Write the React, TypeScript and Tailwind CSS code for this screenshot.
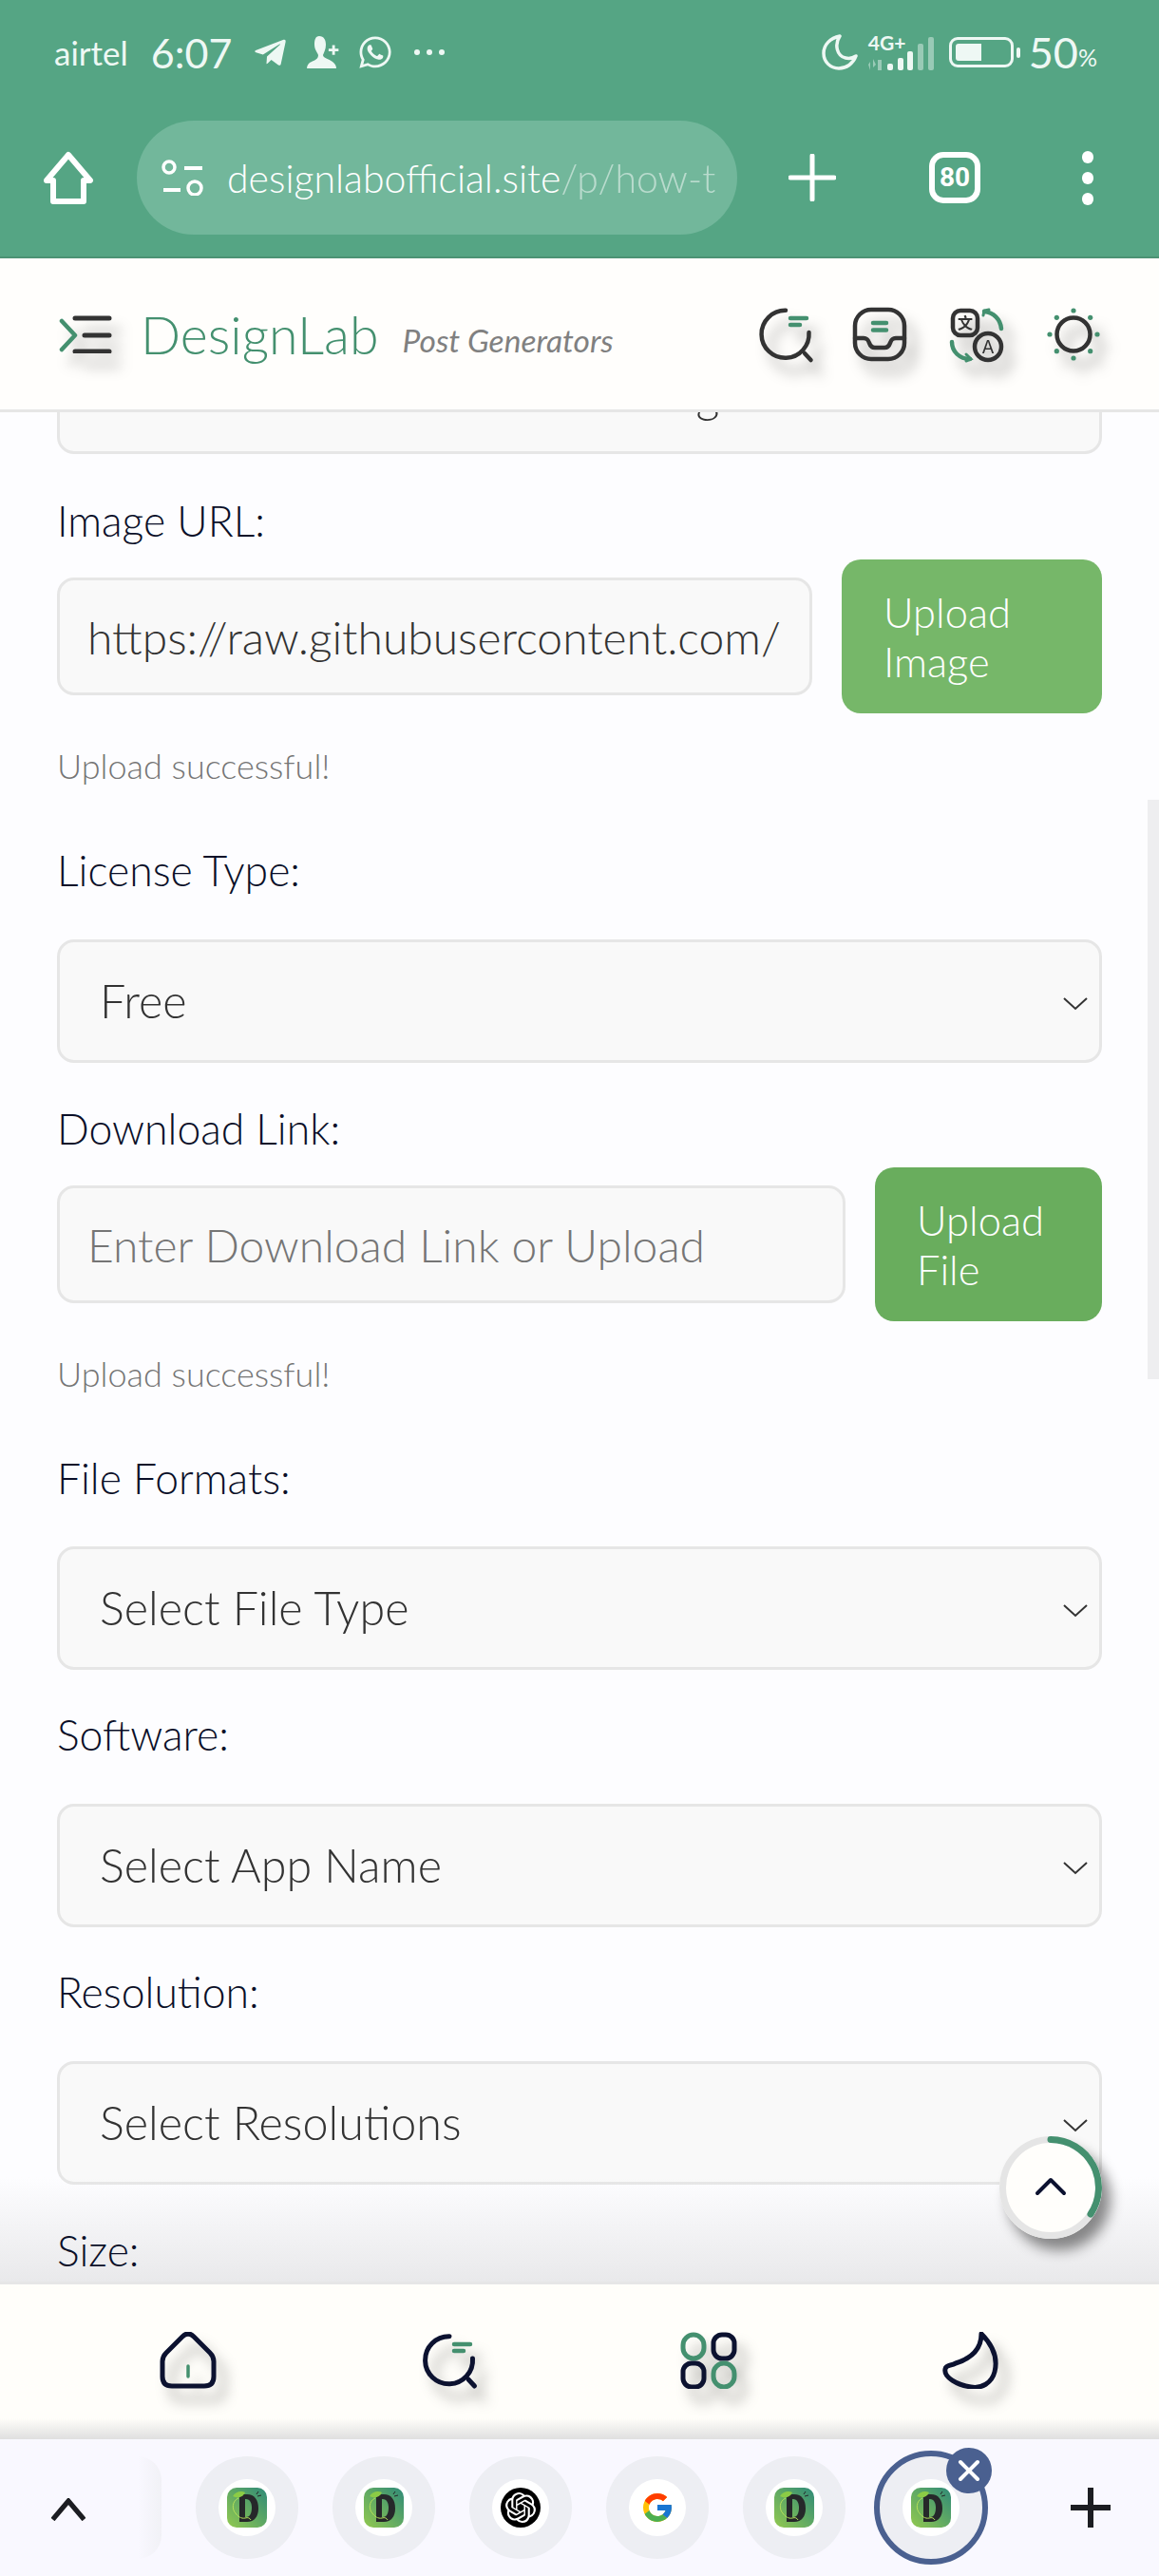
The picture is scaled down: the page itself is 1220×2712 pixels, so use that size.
import { FaTelegramPlane, FaWhatsapp } from 'react-icons/fa';
import { FcGoogle } from 'react-icons/fc';
import { SiOpenai } from 'react-icons/si';

const iconShadow = 'drop-shadow-[10px_14px_7px_rgba(0,0,0,0.3)]';

function StatusBar() {
  return (
    <div className="flex h-[108px] items-center justify-between pl-[57px] pr-[65px] pt-[2px] text-[#eef8f4] font-['Lato',sans-serif]">
      <div className="flex items-center">
        <span className="text-[35px] leading-none">airtel</span>
        <span className="ml-[24px] text-[43px] leading-none">6:07</span>
        <FaTelegramPlane className="ml-[22px] w-[37px] h-[37px]" />
        <svg viewBox="0 0 36 34" className="ml-[20px] w-[36px] h-[34px]" fill="currentColor">
          <path d="M13 0c5 0 7 4 7 9 0 5-2 8-3 11 0 3 6 4 10 7 3 2 4 5 4 7H0c0-3 2-6 5-7 4-2 7-3 7-7-1-3-4-6-4-11 0-5 1-9 5-9z" />
          <path d="M26 12h3v4h4v3h-4v4h-3v-4h-4v-3h4z" transform="translate(2 -2) scale(0.95)" />
        </svg>
        <FaWhatsapp className="ml-[17px] w-[38px] h-[38px]" />
        <div className="ml-[22px] flex gap-[7px]">
          <span className="w-[6px] h-[6px] rounded-full bg-[#eef8f4]" />
          <span className="w-[6px] h-[6px] rounded-full bg-[#eef8f4]" />
          <span className="w-[6px] h-[6px] rounded-full bg-[#eef8f4]" />
        </div>
      </div>
      <div className="flex items-center">
        <svg viewBox="0 0 38 38" className="w-[38px] h-[38px]" fill="none" stroke="currentColor" strokeWidth="3.5" strokeLinejoin="round">
          <path d="M19 2C9 4 2 11 2 20c0 9 7 16 16 16 8 0 15-5 18-13-3 2-7 3-11 2C16 23 13 11 19 2z" />
        </svg>
        <div className="ml-[11px] relative w-[73px] h-[38px]">
          <span className="absolute left-0 -top-[2px] text-[21px] leading-none font-bold">4G+</span>
          <svg viewBox="0 0 73 38" className="absolute inset-0 w-[73px] h-[38px]" fill="currentColor">
            <path d="M2 38V29l-2 3zM5 26v9l3-3z" opacity="0.45" />
            <rect x="10" y="27" width="4" height="11" opacity="0.45" />
            <rect x="20" y="31" width="6" height="7" rx="2" />
            <rect x="31" y="25" width="6" height="13" rx="2" />
            <rect x="41" y="18" width="6" height="20" rx="2" />
            <rect x="52" y="10" width="6" height="28" rx="2" opacity="0.45" />
            <rect x="63" y="3" width="6" height="35" rx="2" opacity="0.45" />
          </svg>
        </div>
        <div className="ml-[12px] w-[68px] h-[32px] border-[3px] border-[#eef8f4] rounded-[9px] p-[4px]">
          <div className="w-[27px] h-full bg-[#eef8f4] rounded-l-[3px]" />
        </div>
        <span className="ml-[3px] w-[4px] h-[11px] rounded-[2px] bg-[#eef8f4]" />
        <span className="ml-[9px] text-[45px] leading-none">50</span>
        <span className="text-[25px] leading-none mt-[10px]">%</span>
      </div>
    </div>
  );
}

function UrlRow() {
  return (
    <div className="flex items-center h-[120px] mt-[19px] text-white">
      <svg viewBox="0 0 54 56" className="ml-[45px] w-[54px] h-[56px]" fill="none" stroke="currentColor" strokeWidth="6" strokeLinejoin="round">
        <path d="M27 4 50 31h-7v22H11V31H4z" />
      </svg>
      <div className="ml-[45px] flex items-center w-[632px] h-[120px] rounded-full bg-[#72b79b] overflow-hidden">
        <svg viewBox="0 0 46 38" className="ml-[26px] w-[46px] h-[38px] shrink-0" fill="none" stroke="currentColor" strokeWidth="3.5">
          <circle cx="8" cy="8" r="6" />
          <path d="M24 9h19M2 32h18" strokeWidth="4" />
          <circle cx="35" cy="30" r="7" />
        </svg>
        <span className="ml-[23px] text-[41px] leading-none whitespace-nowrap font-light font-['Lato',sans-serif]">
          designlabofficial.site<span className="opacity-50">/p/how-t</span>
        </span>
      </div>
      <svg viewBox="0 0 50 50" className="ml-[54px] w-[50px] h-[50px]" stroke="currentColor" strokeWidth="5" strokeLinecap="round">
        <path d="M25 2v46M2 25h46" />
      </svg>
      <div className="ml-[98px] flex items-center justify-center w-[54px] h-[54px] border-[6px] border-white rounded-[15px] text-[28px] font-bold leading-none font-['Roboto',sans-serif]">
        80
      </div>
      <div className="ml-[107px] flex flex-col gap-[9px]">
        <span className="w-[12px] h-[13px] rounded-full bg-white" />
        <span className="w-[12px] h-[13px] rounded-full bg-white" />
        <span className="w-[12px] h-[13px] rounded-full bg-white" />
      </div>
    </div>
  );
}

function SearchIcon({ stroke, width }: { stroke: string; width: number }) {
  return (
    <svg viewBox="0 0 60 60" className={`w-[60px] h-[60px] overflow-visible ${iconShadow}`} fill="none" strokeLinecap="round">
      <path d="M33 4.800A25 25 0 1 0 57.500 28" stroke={stroke} strokeWidth={width} />
      <path d="M53 50l6.500 7" stroke={stroke} strokeWidth={width} />
      <path d="M38 13h17M38 20h10" stroke="#44906f" strokeWidth="4.500" />
    </svg>
  );
}

function InboxIcon() {
  return (
    <svg viewBox="0 0 60 60" className={`w-[60px] h-[60px] ${iconShadow}`} fill="none" strokeLinecap="round">
      <rect x="4" y="4" width="52" height="52" rx="17" stroke="#333333" strokeWidth="4.500" />
      <path d="M4 34h9c4 0 5 2 6 5 1 3 3 5 6 5h10c3 0 5-2 6-5 1-3 2-5 6-5h9" stroke="#333333" strokeWidth="4.500" />
      <path d="M23 18h14M23 25.500h14" stroke="#44906f" strokeWidth="4.500" />
    </svg>
  );
}

function TranslateIcon() {
  return (
    <svg viewBox="0 0 60 60" className={`w-[60px] h-[60px] ${iconShadow}`} fill="none" strokeLinecap="round">
      <rect x="5" y="5" width="26" height="26" rx="8" stroke="#333333" strokeWidth="4.500" />
      <text x="18" y="24" textAnchor="middle" fontSize="16" fontWeight="700" fill="#333333" stroke="none" fontFamily="'Noto Sans CJK SC',sans-serif">文</text>
      <circle cx="42" cy="43" r="14" stroke="#333333" strokeWidth="4.500" />
      <text x="42" y="50" textAnchor="middle" fontSize="19" fill="#333333" stroke="none" fontFamily="'Inter',sans-serif">A</text>
      <path d="M38 6C48 7 55 14 56 24" stroke="#44906f" strokeWidth="4.500" />
      <path d="M37 10l1-5 5-1" stroke="#44906f" strokeWidth="3" />
      <path d="M4 38c0 10 8 18 19 18" stroke="#44906f" strokeWidth="4.500" />
      <path d="M19 51l5 5-5 2" stroke="#44906f" strokeWidth="3" />
    </svg>
  );
}

function SunIcon() {
  const dots = [
    [30, 5],
    [47.7, 12.3],
    [55, 30],
    [47.7, 47.7],
    [30, 55],
    [12.3, 47.7],
    [5, 30],
    [12.3, 12.3],
  ];
  return (
    <svg viewBox="0 0 60 60" className={`w-[60px] h-[60px] ${iconShadow}`} fill="none">
      <circle cx="30" cy="30" r="17.500" stroke="#333333" strokeWidth="4.500" />
      {dots.map(([cx, cy]) => (
        <circle key={`${cx}-${cy}`} cx={cx} cy={cy} r="2.600" fill="#44906f" />
      ))}
    </svg>
  );
}

function TopHeader() {
  return (
    <div className="flex items-center h-[162px] pl-[62px] pr-[60px] bg-[#fffefc] border-b-[3px] border-[#e6e6e6] shrink-0">
      <svg viewBox="0 0 56 40" className={`w-[56px] h-[40px] ${iconShadow}`} fill="none" strokeLinecap="round">
        <path d="M3 6l14 15L3 36" stroke="#44906f" strokeWidth="4.500" strokeLinejoin="round" />
        <path d="M17 3h36M27 21h26M17 38h36" stroke="#333333" strokeWidth="5" />
      </svg>
      <span className="ml-[30px] text-[55.500px] leading-none text-[#44906f] font-['Lato',sans-serif] font-light">DesignLab</span>
      <span className="ml-[25px] mt-[14px] text-[33.500px] leading-none text-[#808080] italic font-['Lato',sans-serif]">Post Generators</span>
      <div className="ml-auto flex gap-[42px]">
        <SearchIcon stroke="#333333" width={4.5} />
        <InboxIcon />
        <TranslateIcon />
        <SunIcon />
      </div>
    </div>
  );
}

function Label({ text, className }: { text: string; className: string }) {
  return <div className={`relative z-10 h-[50px] text-[44.500px] leading-[50px] text-[#0a0f28] ${className}`}>{text}</div>;
}

function SelectBox({ text, className }: { text: string; className: string }) {
  return (
    <div className={`relative flex items-center h-[130px] pl-[42px] pb-[2px] bg-[#f9f9f9] border-[3px] border-[#e6e6e6] rounded-[18px] text-[48.500px] text-[#333333] ${className}`}>
      {text}
      <svg viewBox="0 0 26 14" className="absolute right-[12px] top-[58px] w-[26px] h-[14px]" fill="none" stroke="#333333" strokeWidth="2">
        <path d="M1 1l12 11L25 1" />
      </svg>
    </div>
  );
}

function UploadRow({ value, placeholder, button, color, width }: { value?: string; placeholder?: string; button: string[]; color: string; width: string }) {
  return (
    <div className="flex items-center gap-[31px] mt-[16px]">
      <input
        readOnly
        value={value ?? ''}
        placeholder={placeholder}
        className="flex-1 min-w-0 h-[124px] px-[29px] bg-[#f9f9f9] border-[3px] border-[#e6e6e6] rounded-[18px] text-[48px] text-[#333333] placeholder:text-[#757575] outline-none"
      />
      <div className={`${width} ${color} shrink-0 h-[162px] rounded-[20px] pl-[44px] flex flex-col justify-center text-[43.500px] leading-[52px] text-white`}>
        {button.map((line) => (
          <span key={line}>{line}</span>
        ))}
      </div>
    </div>
  );
}

function Form() {
  return (
    <div className="relative flex-1 overflow-hidden bg-[#fdfdff]">
      <div className="px-[60px] font-['Lato',sans-serif] font-light">
        <div className="h-[124px] -mt-[80px] pl-[32px] bg-[#f9f9f9] border-[3px] border-[#e6e6e6] rounded-[18px] text-[48.500px] leading-[116px] whitespace-nowrap overflow-hidden text-[#333333]">
          How to Create a Creative Design
        </div>

        <Label text="Image URL:" className="mt-[45px]" />
        <UploadRow value="https://raw.githubusercontent.com/" button={['Upload', 'Image']} color="bg-[#76b769]" width="w-[274px]" />
        <div className="mt-[35px] h-[40px] text-[36px] leading-[40px] text-[#757575]">Upload successful!</div>

        <Label text="License Type:" className="mt-[65px]" />
        <SelectBox text="Free" className="mt-[48px]" />

        <Label text="Download Link:" className="mt-[44px]" />
        <UploadRow placeholder="Enter Download Link or Upload" button={['Upload', 'File']} color="bg-[#69ad5d]" width="w-[239px]" />
        <div className="mt-[35px] h-[40px] text-[36px] leading-[40px] text-[#757575]">Upload successful!</div>

        <Label text="File Formats:" className="mt-[65px]" />
        <SelectBox text="Select File Type" className="mt-[47px]" />

        <Label text="Software:" className="mt-[43px]" />
        <SelectBox text="Select App Name" className="mt-[48px]" />

        <Label text="Resolution:" className="mt-[43px]" />
        <SelectBox text="Select Resolutions" className="mt-[48px]" />

        <Label text="Size:" className="mt-[44px]" />
      </div>

      <div className="absolute right-0 top-[408px] w-[12px] h-[610px] bg-[#eeeef0]" />
      <div className="absolute left-0 right-0 bottom-0 h-[110px] bg-linear-to-b from-[#e9e9eb]/0 to-[#e9e9eb]" />

      <div className="absolute z-20 right-[60px] bottom-[45px] w-[108px] h-[108px] rounded-full bg-[#fffefb] shadow-[9px_12px_14px_rgba(0,0,0,0.45)]">
        <svg viewBox="0 0 108 108" className="w-[108px] h-[108px]" fill="none">
          <circle cx="54" cy="54" r="50.500" stroke="#e5e5e5" strokeWidth="7" />
          <path d="M54 3.500A50.500 50.500 0 0 1 96 82" stroke="#44906f" strokeWidth="7" strokeLinecap="round" />
          <path d="M40 60l14-14 14 14" stroke="#0c1230" strokeWidth="4" strokeLinecap="round" strokeLinejoin="round" />
        </svg>
      </div>
    </div>
  );
}

function BottomNav() {
  return (
    <div className="relative flex items-center h-[166px] pb-[4px] bg-[#fffefa] border-t-[3px] border-[#e6e6e6] shrink-0">
      <div className="absolute left-0 right-0 bottom-0 h-[22px] bg-linear-to-b from-[#fffefa] to-[#dfdfdf]" />
      <svg viewBox="0 0 60 60" className={`ml-[168px] w-[60px] h-[60px] ${iconShadow}`} fill="none" strokeLinecap="round">
        <path d="M24 5Q30-1 36 5L53 22Q57 26 57 31V47Q57 57 47 57H13Q3 57 3 47V31Q3 26 7 22Z" stroke="#0c1230" strokeWidth="5" />
        <path d="M30 36v11" stroke="#44906f" strokeWidth="3.500" />
      </svg>
      <div className="ml-[212px]">
        <SearchIcon stroke="#0c1230" width={5} />
      </div>
      <svg viewBox="0 0 60 60" className={`ml-[216px] w-[60px] h-[60px] ${iconShadow}`} fill="none" strokeWidth="5">
        <rect x="3" y="3" width="22" height="25" rx="11" stroke="#44906f" />
        <rect x="35" y="3" width="22" height="25" rx="9" stroke="#0c1230" />
        <rect x="3" y="33" width="22" height="25" rx="9" stroke="#0c1230" />
        <rect x="35" y="33" width="22" height="25" rx="11" stroke="#44906f" />
      </svg>
      <svg viewBox="0 0 60 60" className={`ml-[215px] w-[60px] h-[60px] ${iconShadow}`} fill="none" stroke="#0c1230" strokeWidth="5" strokeLinejoin="round">
        <path d="M42 2C53 13 60 26 56 42 53 54 42 60 31 58 17 56 2 48 4 39 5 34 10 36 15 33 31 28 42 18 42 2Z" />
      </svg>
    </div>
  );
}

function DesignFavicon() {
  return (
    <svg viewBox="0 0 42 42" className="w-[42px] h-[42px] rounded-[10px]">
      <defs>
        <linearGradient id="fav" x1="0" y1="1" x2="1" y2="0">
          <stop offset="0" stopColor="#92c94f" />
          <stop offset="1" stopColor="#2f8a78" />
        </linearGradient>
      </defs>
      <rect width="42" height="42" fill="url(#fav)" />
      <path d="M13 7h8c8 0 12 6 12 15 0 8-4 14-12 14h-8zM19 12v19h1c4 0 6-4 6-10 0-5-2-9-6-9z" fill="#26282a" fillRule="evenodd" />
      <path d="M6 9c3-5 9-6 13-4-2 5-8 7-13 4z" fill="#8ccc45" />
      <path d="M12 11c-7 3-7 12-3 16 2 3 6 6 10 5 3-1 5 0 6 2" fill="none" stroke="#b5df5a" strokeWidth="1" />
      <path d="M32 9l4-1M31 7l2-3" fill="none" stroke="#26282a" strokeWidth="1" />
    </svg>
  );
}

function TabCircle({ children, active }: { children: React.ReactNode; active?: boolean }) {
  return (
    <div className={`relative flex items-center justify-center w-[108px] h-[108px] rounded-full bg-[#edeef3] shrink-0 ${active ? 'outline-[6px] outline-[#4a6090]' : ''}`}>
      <div className="flex items-center justify-center w-[60px] h-[60px] rounded-full bg-white overflow-hidden">{children}</div>
      {active && (
        <div className="absolute -right-[10px] -top-[9px] flex items-center justify-center w-[48px] h-[48px] rounded-full bg-[#4a6090]">
          <svg viewBox="0 0 24 24" className="w-[24px] h-[24px]" stroke="#ffffff" strokeWidth="4" strokeLinecap="round">
            <path d="M3 3l18 18M21 3L3 21" />
          </svg>
        </div>
      )}
    </div>
  );
}

function TabStrip() {
  return (
    <div className="relative flex items-center h-[144px] pl-[206px] gap-[36px] bg-[#f9f8ff] shrink-0">
      <svg viewBox="0 0 24 16" className="absolute left-[54px] top-[62px] w-[36px] h-[24px]" fill="none" stroke="#1c1d22" strokeWidth="3.500">
        <path d="M1 15L12 2l11 13" />
      </svg>
      <div className="absolute left-[145px] top-[18px] w-[25px] h-[108px] overflow-hidden">
        <div className="w-[25px] h-[108px] rounded-r-full bg-linear-to-r from-[#f9f8ff] to-[#f1f1f6]" />
      </div>
      <TabCircle>
        <DesignFavicon />
      </TabCircle>
      <TabCircle>
        <DesignFavicon />
      </TabCircle>
      <TabCircle>
        <span className="flex items-center justify-center w-[42px] h-[42px] rounded-full bg-black">
          <SiOpenai className="w-[32px] h-[32px] text-white" />
        </span>
      </TabCircle>
      <TabCircle>
        <FcGoogle className="w-[36px] h-[36px]" />
      </TabCircle>
      <TabCircle>
        <DesignFavicon />
      </TabCircle>
      <TabCircle active>
        <DesignFavicon />
      </TabCircle>
      <svg viewBox="0 0 42 42" className="absolute left-[1127px] top-[51px] w-[42px] h-[42px]" stroke="#1c1d22" strokeWidth="6">
        <path d="M21 0v42M0 21h42" />
      </svg>
    </div>
  );
}

export default function App() {
  return (
    <div className="flex flex-col w-[1220px] h-[2712px] overflow-hidden font-['Lato',sans-serif]">
      <div className="h-[272px] shrink-0 bg-[#55a584] border-b-[2px] border-[#4b9374]">
        <StatusBar />
        <UrlRow />
      </div>
      <TopHeader />
      <Form />
      <BottomNav />
      <TabStrip />
    </div>
  );
}
